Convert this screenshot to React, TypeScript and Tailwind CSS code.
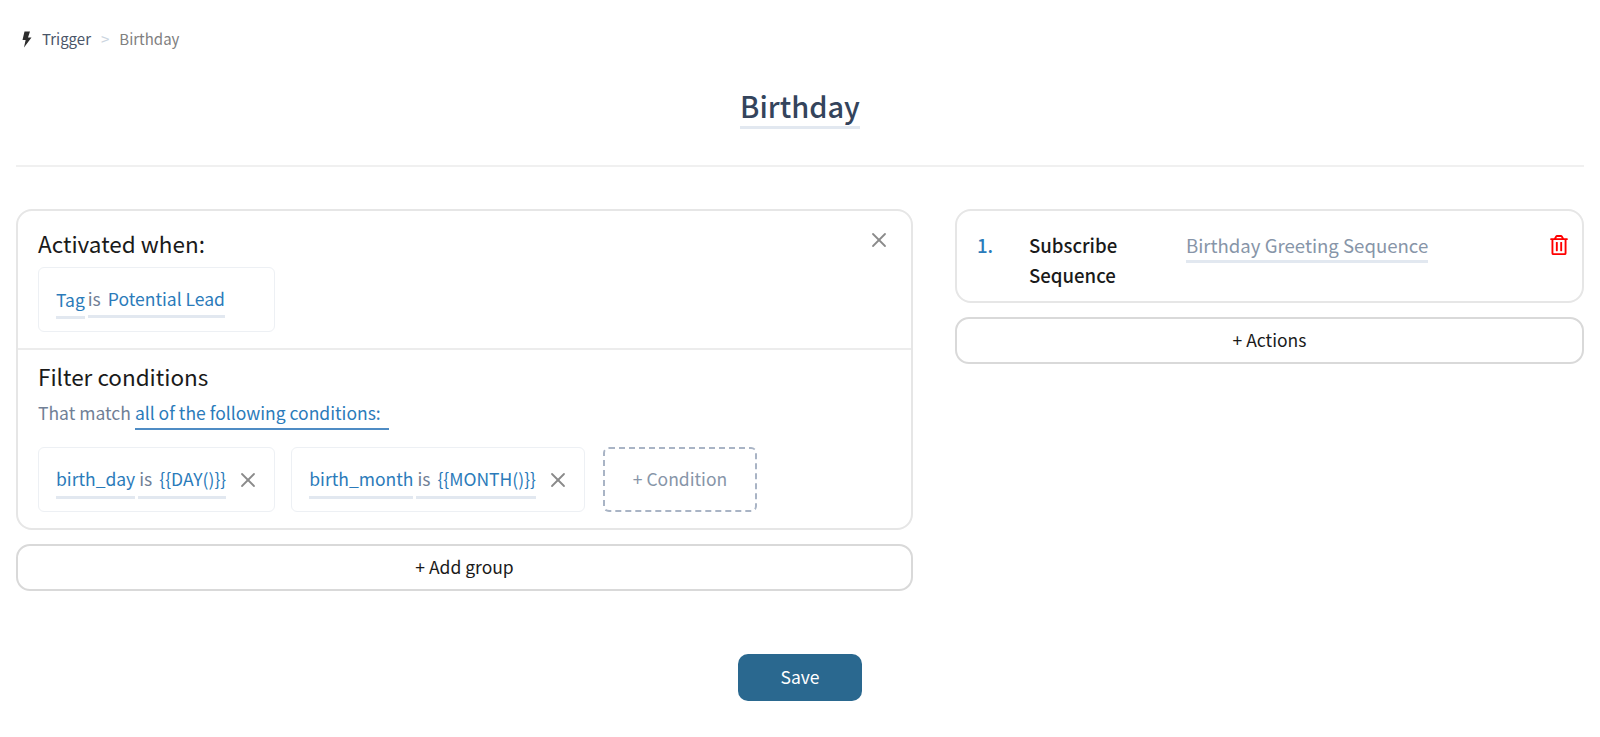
import { X } from 'lucide-react';
import { FaRegTrashAlt } from 'react-icons/fa';

const blue = 'text-[#2b7bba]';

function Field({ className, children }: { className: string; children: React.ReactNode }) {
  return <span className={`leading-[24px] border-b-[3px] border-[#e2e8f0] ${className}`}>{children}</span>;
}

function ConditionChip({ name, value }: { name: string; value: string }) {
  return (
    <div className="h-[65px] border border-[#edf0f4] rounded-md pl-[17px] pr-[14px] flex items-center text-[17.5px]">
      <Field className="pt-[6px] pb-[5px]">
        <span className={blue}>{name}</span>
      </Field>
      <div className="ml-[3px]">
        <Field className="pt-[6px] pb-[5px]">
          <span className="ml-[1px] text-[#718096]">is</span>
          <span className={`${blue} ml-[7px]`}>{value}</span>
        </Field>
      </div>
      <X className="ml-[10px] text-[#8a8a8a]" size={24} strokeWidth={1.8} />
    </div>
  );
}

function WideButton({ label }: { label: string }) {
  return (
    <button className="w-full h-[47px] border-2 border-[#d9d9d9] rounded-[14px] bg-white text-[17.5px] text-[#1a1a1a]">
      {label}
    </button>
  );
}

export default function App() {
  return (
    <div className="h-[737px] bg-white px-4 font-['Noto_Sans_CJK_SC','Noto_Sans',sans-serif] overflow-hidden">
      <div className="h-[78px] flex items-center text-[15px]">
        <svg width="11" height="17" viewBox="0 0 11 17" className="ml-[5px]">
          <path d="M3.5 0.5h5.5L7 6.5H10.5L3 16.5 4.6 9H1.5z" fill="#2d2d2d" />
        </svg>
        <span className="text-[#4a5568] ml-[10px]">Trigger</span>
        <span className="text-[#cbd5e0] ml-[10px]">&gt;</span>
        <span className="text-[#808080] ml-[10px]">Birthday</span>
      </div>
      <div className="h-[89px] border-b-2 border-[#f0f0f0] flex justify-center">
        <h1 className="h-[43px] mt-[8px] text-[29px] leading-[38px] font-medium text-[#34445c] border-b-[3px] border-[#e2e8f0]">
          Birthday
        </h1>
      </div>
      <div className="flex gap-[42px] mt-[42px]">
        <div className="w-[897px] flex flex-col gap-[14px]">
          <div className="h-[321px] border-2 border-[#e6e6e6] rounded-[16px] flex flex-col">
            <div className="h-[139px] border-b-2 border-[#ececec] pl-[20px] pt-[16px] relative">
              <div className="text-[22.5px] leading-[32px] text-[#1a1a1a]">Activated when:</div>
              <X className="absolute right-[20px] top-[17px] text-[#8a8a8a]" size={24} strokeWidth={1.8} />
              <div className="w-[237px] h-[65px] mt-[8px] border border-[#edf0f4] rounded-md pl-[17px] flex items-center text-[17.5px]">
                <Field className="pt-[7px] pb-[4px]">
                  <span className={blue}>Tag</span>
                </Field>
                <div className="ml-[3px]">
                  <Field className="pt-[7px] pb-[4px]">
                    <span className="text-[#718096]">is</span>
                    <span className={`${blue} ml-[7px]`}>Potential Lead</span>
                  </Field>
                </div>
              </div>
            </div>
            <div className="pl-[20px] pt-[10px]">
              <div className="text-[22.5px] leading-[32px] text-[#1a1a1a]">Filter conditions</div>
              <div className="mt-[8px] flex gap-[4px] text-[17.5px] leading-[26px] text-[#718096]">
                That match
                <span className={`${blue} w-[254px] pb-[2px] border-b-2 border-[#4f8cc4]`}>
                  all of the following conditions:
                </span>
              </div>
              <div className="flex gap-[16px] mt-[17px]">
                <ConditionChip name="birth_day" value="{{DAY()}}" />
                <ConditionChip name="birth_month" value="{{MONTH()}}" />
                <button className="w-[154px] h-[65px] ml-[2px] border-2 border-dashed border-[#a9b4c5] rounded-md text-[17.5px] text-[#8795a8]">
                  + Condition
                </button>
              </div>
            </div>
          </div>
          <WideButton label="+ Add group" />
        </div>
        <div className="w-[629px] flex flex-col gap-[14px]">
          <div className="h-[94px] border-2 border-[#e6e6e6] rounded-[16px] pl-[20px] pr-[13px] pt-[19px] flex text-[18.6px] leading-[30px]">
            <span className="w-[52px] font-medium text-[#2b7bba]">1.</span>
            <span className="w-[157px] font-medium text-[#1a1a1a]">
              Subscribe
              <br />
              Sequence
            </span>
            <span className="h-[33px] text-[#8795a8] border-b-[3px] border-[#e2e8f0]">Birthday Greeting Sequence</span>
            <FaRegTrashAlt className="ml-auto mt-[5px] text-[#ff0000]" size={20} />
          </div>
          <WideButton label="+ Actions" />
        </div>
      </div>
      <div className="flex justify-center mt-[63px]">
        <button className="w-[124px] h-[47px] bg-[#2a688f] rounded-[10px] text-[17.5px] text-white">Save</button>
      </div>
    </div>
  );
}
